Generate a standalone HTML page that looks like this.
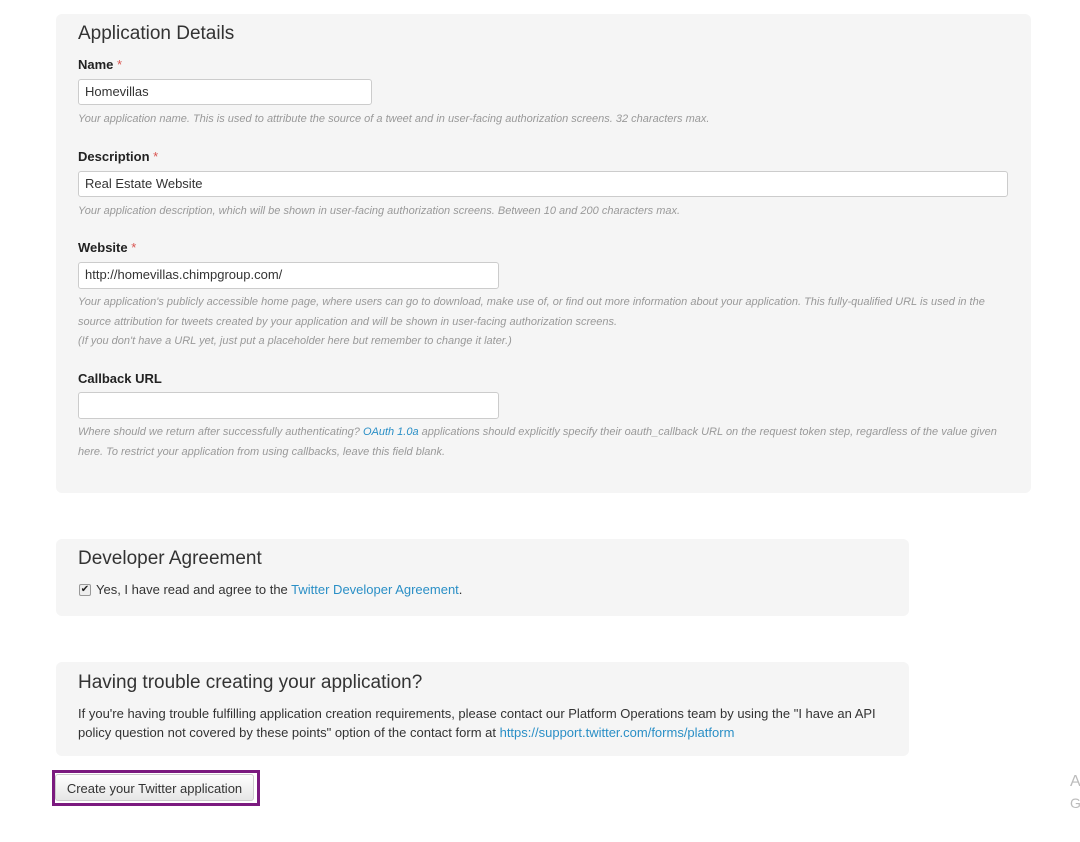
<!DOCTYPE html>
<html><head><style>
body{margin:0;width:1080px;height:842px;background:#fff;font-family:"Liberation Sans",sans-serif;color:#333;position:relative;overflow:hidden}
.a{position:absolute;white-space:nowrap}
.p{position:absolute;background:#f5f5f5;border-radius:6px}
.h{font-size:19px;color:#333}
.l{font-size:13px;font-weight:bold;color:#222}
.l span{color:#d9534f;font-weight:normal}
.i{position:absolute;background:#fff;border:1px solid #ccc;border-radius:3px;box-sizing:border-box;font-size:13px;padding:5px 6px;color:#333;line-height:14px}
.t{font-size:11px;font-style:italic;color:#999;line-height:19.5px}
.lk{color:#2a8fc6}
.b{font-size:13px;color:#333;line-height:19px}
</style></head><body>
<div class="p" style="left:56px;top:14px;width:975px;height:479px"></div>
<div class="p" style="left:56px;top:539px;width:853px;height:77px"></div>
<div class="p" style="left:56px;top:662px;width:853px;height:94px"></div>

<div class="a h" style="left:78px;top:23px">Application Details</div>
<div class="a l" style="left:78px;top:57px">Name <span>*</span></div>
<div class="i" style="left:78px;top:79px;width:294px;height:26px">Homevillas</div>
<div class="a t" style="left:78px;top:110px">Your application name. This is used to attribute the source of a tweet and in user-facing authorization screens. 32 characters max.</div>

<div class="a l" style="left:78px;top:149px">Description <span>*</span></div>
<div class="i" style="left:78px;top:171px;width:930px;height:26px">Real Estate Website</div>
<div class="a t" style="left:78px;top:202px">Your application description, which will be shown in user-facing authorization screens. Between 10 and 200 characters max.</div>

<div class="a l" style="left:78px;top:240px">Website <span>*</span></div>
<div class="i" style="left:78px;top:262px;width:421px;height:27px">http://homevillas.chimpgroup.com/</div>
<div class="a t" style="left:78px;top:293px">Your application's publicly accessible home page, where users can go to download, make use of, or find out more information about your application. This fully-qualified URL is used in the<br>source attribution for tweets created by your application and will be shown in user-facing authorization screens.<br>(If you don't have a URL yet, just put a placeholder here but remember to change it later.)</div>

<div class="a l" style="left:78px;top:371px">Callback URL</div>
<div class="i" style="left:78px;top:392px;width:421px;height:27px"></div>
<div class="a t" style="left:78px;top:423px">Where should we return after successfully authenticating? <span class="lk">OAuth 1.0a</span> applications should explicitly specify their oauth_callback URL on the request token step, regardless of the value given<br>here. To restrict your application from using callbacks, leave this field blank.</div>

<div class="a h" style="left:78px;top:548px">Developer Agreement</div>
<div class="a" style="left:79px;top:584px;width:10px;height:10px;border:1px solid #999;border-radius:2px;background:#eee;font-size:10px;line-height:10px;text-align:center;color:#222">✔</div>
<div class="a b" style="left:96px;top:580px">Yes, I have read and agree to the <span class="lk">Twitter Developer Agreement</span>.</div>

<div class="a h" style="left:78px;top:672px">Having trouble creating your application?</div>
<div class="a b" style="left:78px;top:704px">If you're having trouble fulfilling application creation requirements, please contact our Platform Operations team by using the "I have an API<br>policy question not covered by these points" option of the contact form at <span class="lk">https://support.twitter.com/forms/platform</span></div>

<div class="a" style="left:52px;top:770px;width:202px;height:30px;border:3px solid #7b1a7f"></div>
<div class="a" style="left:55px;top:774px;width:199px;height:27px;box-sizing:border-box;border:1px solid #ccc;border-radius:3px;background:linear-gradient(#fff,#e6e6e6);font-size:13px;line-height:27px;text-align:center;color:#333">Create your Twitter application</div>

<div class="a" style="left:1070px;top:773px;font-size:16px;color:#bbb">A</div>
<div class="a" style="left:1070px;top:795px;font-size:14px;color:#bbb">G</div>
</body></html>
